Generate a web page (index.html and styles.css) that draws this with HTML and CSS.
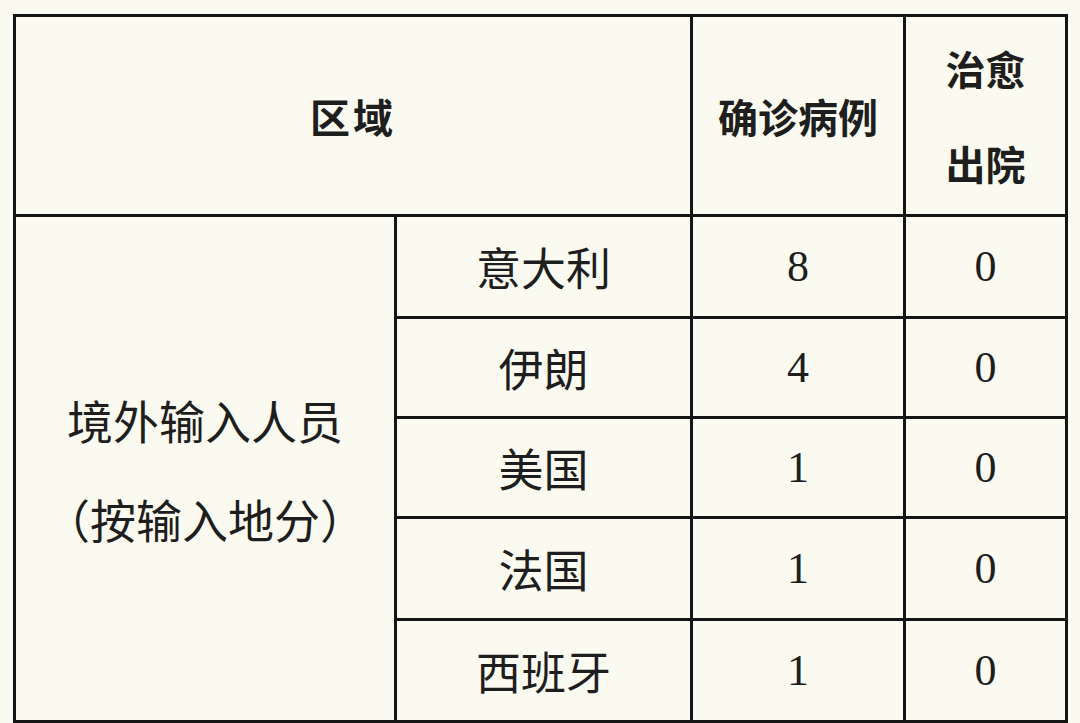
FILE: index.html
```html
<!DOCTYPE html>
<html lang="zh">
<head>
<meta charset="utf-8">
<link rel="stylesheet" href="styles.css">
</head>
<body>
<table class="cases">
  <colgroup>
    <col class="c1"><col class="c2"><col class="c3"><col class="c4">
  </colgroup>
  <thead>
    <tr class="head">
      <th colspan="2" class="h-region">区域</th>
      <th class="h-conf">确诊病例</th>
      <th class="h-cure">治愈<br>出院</th>
    </tr>
  </thead>
  <tbody>
    <tr class="r1">
      <td rowspan="5" class="group">境外输入人员<br>（按输入地分）</td>
      <td class="country">意大利</td><td class="num">8</td><td class="num">0</td>
    </tr>
    <tr class="r2"><td class="country">伊朗</td><td class="num">4</td><td class="num">0</td></tr>
    <tr class="r3"><td class="country">美国</td><td class="num">1</td><td class="num">0</td></tr>
    <tr class="r4"><td class="country">法国</td><td class="num">1</td><td class="num">0</td></tr>
    <tr class="r5"><td class="country">西班牙</td><td class="num">1</td><td class="num">0</td></tr>
  </tbody>
</table>
</body>
</html>
```
FILE: styles.css
```css
html, body {
  margin: 0;
  padding: 0;
  background: #fbfaf0;
}
body {
  padding: 14px 0 0 13px;
  font-family: "Noto Sans CJK SC", "Noto Sans", sans-serif;
  color: #1e1e1e;
}
.cases {
  border-collapse: collapse;
  table-layout: fixed;
  width: 1052px;
}
.c1 { width: 381px; }
.c2 { width: 296px; }
.c3 { width: 213px; }
.c4 { width: 162px; }
.cases th, .cases td {
  border: 3px solid #141414;
  padding: 0;
  text-align: center;
  vertical-align: middle;
}
.head { height: 200px; }
.cases th {
  font-weight: 700;
  font-size: 40px;
}
.h-region { font-size: 44px; letter-spacing: 3px; padding-left: 3px; }
.h-cure { line-height: 95px; }
.r1 { height: 102px; }
.r2, .r3 { height: 100px; }
.r4, .r5 { height: 102px; }
.country {
  font-size: 45px;
  font-weight: 400;
}
.group {
  font-size: 46px;
  line-height: 99px;
  padding-right: 6px;
}
.num {
  font-family: "Liberation Serif", "Times New Roman", serif;
  font-size: 44px;
}
```
